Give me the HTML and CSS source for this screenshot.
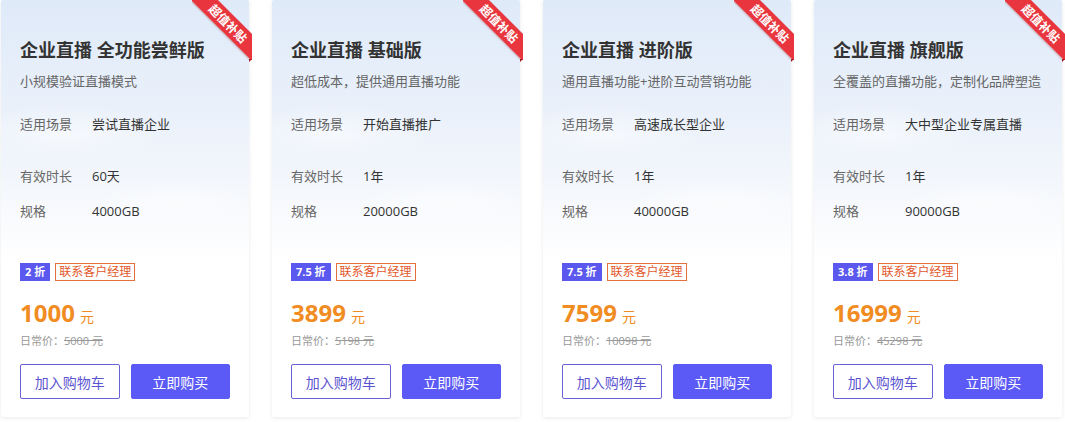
FILE: index.html
```html
<!DOCTYPE html>
<html lang="zh">
<head>
<meta charset="utf-8">
<link rel="stylesheet" href="styles.css">
</head>
<body>
<div class="cards">
  <div class="card">
    <div class="ribbon-clip"><div class="ribbon">超值补贴</div></div>
    <div class="fold"></div>
    <h2 class="title">企业直播 全功能尝鲜版</h2>
    <p class="sub">小规模验证直播模式</p>
    <div class="row row-scene"><span class="lbl">适用场景</span><span class="val">尝试直播企业</span></div>
    <div class="row"><span class="lbl">有效时长</span><span class="val">60天</span></div>
    <div class="row"><span class="lbl">规格</span><span class="val">4000GB</span></div>
    <div class="tags"><span class="disc">2 折</span><span class="contact">联系客户经理</span></div>
    <div class="price"><span class="num">1000</span><span class="unit">元</span></div>
    <div class="orig">日常价：<s>5000 元</s></div>
    <div class="btns"><button class="btn ghost">加入购物车</button><button class="btn primary">立即购买</button></div>
  </div>
  <div class="card">
    <div class="ribbon-clip"><div class="ribbon">超值补贴</div></div>
    <div class="fold"></div>
    <h2 class="title">企业直播 基础版</h2>
    <p class="sub">超低成本，提供通用直播功能</p>
    <div class="row row-scene"><span class="lbl">适用场景</span><span class="val">开始直播推广</span></div>
    <div class="row"><span class="lbl">有效时长</span><span class="val">1年</span></div>
    <div class="row"><span class="lbl">规格</span><span class="val">20000GB</span></div>
    <div class="tags"><span class="disc">7.5 折</span><span class="contact">联系客户经理</span></div>
    <div class="price"><span class="num">3899</span><span class="unit">元</span></div>
    <div class="orig">日常价：<s>5198 元</s></div>
    <div class="btns"><button class="btn ghost">加入购物车</button><button class="btn primary">立即购买</button></div>
  </div>
  <div class="card">
    <div class="ribbon-clip"><div class="ribbon">超值补贴</div></div>
    <div class="fold"></div>
    <h2 class="title">企业直播 进阶版</h2>
    <p class="sub">通用直播功能+进阶互动营销功能</p>
    <div class="row row-scene"><span class="lbl">适用场景</span><span class="val">高速成长型企业</span></div>
    <div class="row"><span class="lbl">有效时长</span><span class="val">1年</span></div>
    <div class="row"><span class="lbl">规格</span><span class="val">40000GB</span></div>
    <div class="tags"><span class="disc">7.5 折</span><span class="contact">联系客户经理</span></div>
    <div class="price"><span class="num">7599</span><span class="unit">元</span></div>
    <div class="orig">日常价：<s>10098 元</s></div>
    <div class="btns"><button class="btn ghost">加入购物车</button><button class="btn primary">立即购买</button></div>
  </div>
  <div class="card">
    <div class="ribbon-clip"><div class="ribbon">超值补贴</div></div>
    <div class="fold"></div>
    <h2 class="title">企业直播 旗舰版</h2>
    <p class="sub">全覆盖的直播功能，定制化品牌塑造</p>
    <div class="row row-scene"><span class="lbl">适用场景</span><span class="val">大中型企业专属直播</span></div>
    <div class="row"><span class="lbl">有效时长</span><span class="val">1年</span></div>
    <div class="row"><span class="lbl">规格</span><span class="val">90000GB</span></div>
    <div class="tags"><span class="disc">3.8 折</span><span class="contact">联系客户经理</span></div>
    <div class="price"><span class="num">16999</span><span class="unit">元</span></div>
    <div class="orig">日常价：<s>45298 元</s></div>
    <div class="btns"><button class="btn ghost">加入购物车</button><button class="btn primary">立即购买</button></div>
  </div>
</div>
</body>
</html>
```
FILE: styles.css
```css
* { box-sizing: border-box; }
html, body { margin: 0; padding: 0; background: #ffffff; }
body {
  font-family: "Open Sans", "Noto Sans CJK SC", sans-serif;
  color: #333;
  width: 1065px;
  height: 422px;
  overflow: hidden;
}
.cards {
  display: flex;
  gap: 23px;
  padding-left: 1px;
}
.card {
  position: relative;
  width: 248px;
  height: 417px;
  padding: 38px 19px 18px 19px;
  background:
    radial-gradient(ellipse 120px 30px at 70% 48%, rgba(255,255,255,0.55), rgba(255,255,255,0) 70%),
    radial-gradient(ellipse 140px 40px at 25% 32%, rgba(255,255,255,0.5), rgba(255,255,255,0) 70%),
    linear-gradient(180deg, #dfeaf9 0%, #e9f0fa 25%, #f4f7fc 45%, #ffffff 62%, #ffffff 100%);
  box-shadow: 0 1px 4px rgba(0, 0, 0, 0.09);
  border-radius: 2px;
  display: flex;
  flex-direction: column;
}
.ribbon-clip {
  position: absolute;
  top: 0;
  right: -3px;
  width: 60px;
  height: 60px;
  overflow: hidden;
}
.ribbon {
  position: absolute;
  left: -14px;
  top: 14px;
  width: 100px;
  height: 19px;
  transform: rotate(45deg);
  background: #e8353e;
  color: #fff;
  font-size: 12px;
  font-weight: 700;
  line-height: 19px;
  text-align: center;
  box-shadow: 0 1px 2px rgba(150, 0, 0, 0.3);
}
.fold {
  position: absolute;
  right: -3px;
  top: 59px;
  width: 0;
  height: 0;
  border-left: 3px solid #9e1a20;
  border-bottom: 3px solid transparent;
}
.title {
  margin: 0;
  font-size: 18px;
  line-height: 24px;
  font-weight: 700;
  color: #333;
}
.sub {
  margin: 9px 0 0;
  font-size: 13px;
  line-height: 20px;
  color: #666;
}
.row {
  display: flex;
  font-size: 13px;
  line-height: 20px;
  margin-top: 15px;
}
.row-scene { margin-top: 23px; height: 52px; }
.row-scene + .row { margin-top: 0; }
.lbl { width: 72px; flex: none; color: #666; }
.val { color: #333; }
.tags {
  display: flex;
  gap: 5px;
  margin-top: 42px;
  height: 18px;
}
.disc {
  background: #5a58ee;
  color: #fff;
  font-size: 11px;
  font-weight: 700;
  line-height: 18px;
  padding: 0 5px;
}
.contact {
  border: 1px solid #e5703c;
  color: #e2582b;
  background: #fff;
  font-size: 12px;
  line-height: 16px;
  padding: 0 3px;
}
.price {
  margin-top: 17px;
  display: flex;
  align-items: baseline;
  gap: 5px;
  color: #f18c23;
  height: 30px;
}
.num {
  font-size: 24px;
  font-weight: 700;
  line-height: 30px;
}
.unit {
  font-size: 14px;
}
.orig {
  margin-top: 5px;
  font-size: 11px;
  line-height: 16px;
  color: #999;
}
.orig s { color: #999; }
.btns {
  display: flex;
  gap: 11px;
  margin-top: auto;
}
.btn {
  width: 100px;
  height: 35px;
  font-family: "Open Sans", "Noto Sans CJK SC", sans-serif;
  font-size: 14px;
  border-radius: 2px;
  cursor: pointer;
}
.ghost {
  background: #fff;
  border: 1px solid #6862d6;
  color: #5a54d0;
}
.primary {
  background: #5b5af6;
  border: 1px solid #5b5af6;
  color: #fff;
}
```
